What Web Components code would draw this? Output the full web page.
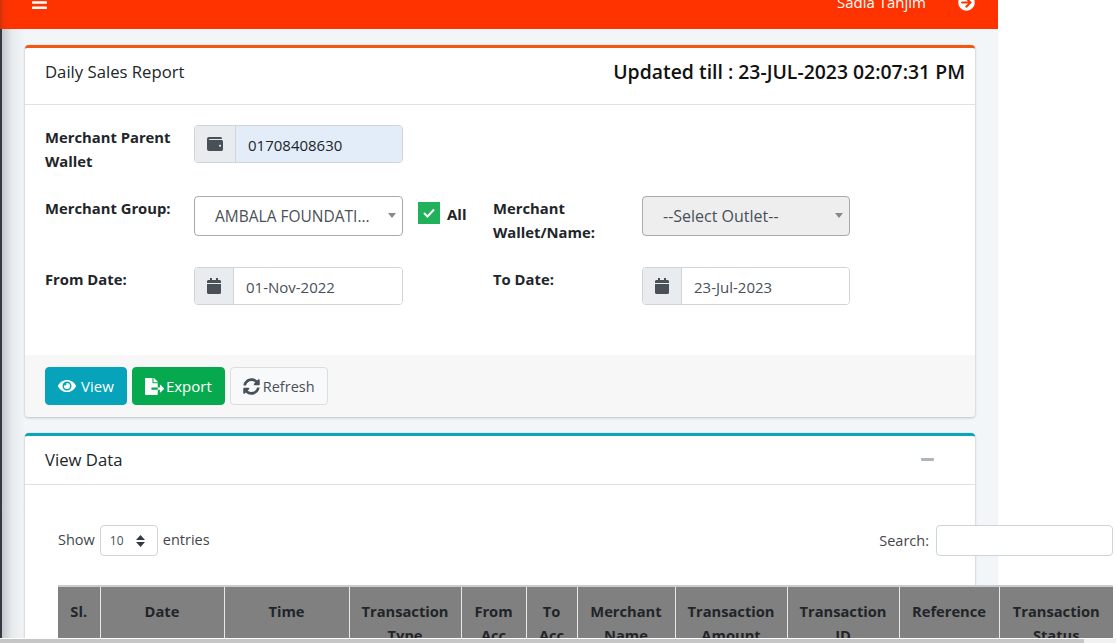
<!DOCTYPE html>
<html>
<head>
<meta charset="utf-8">
<title>Daily Sales Report</title>
<style>
html,body{margin:0;padding:0;background:#fff;overflow:hidden;}
body{font-family:"Open Sans","Noto Sans",sans-serif;font-size:15px;color:#212529;}
</style>
</head>
<body>
<app-page>
  <top-bar user="Sadia Tanjim"></top-bar>
  <ui-card accent="#f4590f" style="margin-top:16px">
    <span slot="title">Daily Sales Report</span>
    <span slot="tools" class="updated">Updated till : 23-JUL-2023 02:07:31 PM</span>
    <form-grid>
      <field-label>Merchant Parent Wallet</field-label>
      <input-group icon="wallet" value="01708408630" filled></input-group>
      <span></span><span></span><span></span>

      <field-label>Merchant Group:</field-label>
      <select-box value="AMBALA FOUNDATI..."></select-box>
      <check-box label="All"></check-box>
      <field-label>Merchant Wallet/Name:</field-label>
      <select-box value="--Select Outlet--" disabled></select-box>

      <field-label>From Date:</field-label>
      <input-group icon="calendar" value="01-Nov-2022"></input-group>
      <span></span>
      <field-label>To Date:</field-label>
      <input-group icon="calendar" value="23-Jul-2023"></input-group>
    </form-grid>
    <div slot="footer" style="display:flex;gap:5px">
      <ui-button kind="info" icon="eye" size="16">View</ui-button>
      <ui-button kind="success" icon="export" size="17">Export</ui-button>
      <ui-button kind="light" icon="sync" size="17">Refresh</ui-button>
    </div>
  </ui-card>
  <ui-card accent="#0ba5b9" collapsible style="margin-top:16px">
    <span slot="title">View Data</span>
    <sales-table></sales-table>
  </ui-card>
</app-page>

<script>
const ICONS={
  bars:['0 0 448 512','M16 132h416c8.837 0 16-7.163 16-16V76c0-8.837-7.163-16-16-16H16C7.163 60 0 67.163 0 76v40c0 8.837 7.163 16 16 16zm0 160h416c8.837 0 16-7.163 16-16v-40c0-8.837-7.163-16-16-16H16c-8.837 0-16 7.163-16 16v40c0 8.837 7.163 16 16 16zm0 160h416c8.837 0 16-7.163 16-16v-40c0-8.837-7.163-16-16-16H16c-8.837 0-16 7.163-16 16v40c0 8.837 7.163 16 16 16z'],
  wallet:['0 0 512 512','M461.2 128H80c-8.84 0-16-7.16-16-16s7.16-16 16-16h384c8.84 0 16-7.16 16-16 0-26.51-21.49-48-48-48H64C28.65 32 0 60.65 0 96v320c0 35.35 28.65 64 64 64h397.2c28.02 0 50.8-21.53 50.8-48V176c0-26.47-22.78-48-50.8-48zM416 340c-17.67 0-32-14.33-32-32s14.33-32 32-32 32 14.33 32 32-14.33 32-32 32z'],
  calendar:['0 0 448 512','M12 192h424c6.6 0 12 5.4 12 12v260c0 26.5-21.5 48-48 48H48c-26.5 0-48-21.5-48-48V204c0-6.6 5.4-12 12-12zm436-44v-36c0-26.5-21.5-48-48-48h-48V12c0-6.6-5.4-12-12-12h-40c-6.6 0-12 5.4-12 12v52H160V12c0-6.6-5.4-12-12-12h-40c-6.6 0-12 5.4-12 12v52H48C21.5 64 0 85.5 0 112v36c0 6.6 5.4 12 12 12h424c6.6 0 12-5.4 12-12z'],
  eye:['0 0 576 512','M572.52 241.4C518.29 135.59 410.93 64 288 64S57.68 135.64 3.48 241.41a32.35 32.35 0 0 0 0 29.19C57.71 376.41 165.07 448 288 448s230.32-71.64 284.52-177.41a32.35 32.35 0 0 0 0-29.19zM288 400a144 144 0 1 1 144-144 143.93 143.93 0 0 1-144 144zm0-240a95.31 95.31 0 0 0-25.31 3.79 47.85 47.85 0 0 1-66.9 66.9A95.78 95.78 0 1 0 288 160z'],
  export:['0 0 576 512','M384 121.9c0-6.3-2.5-12.4-7-16.9L279.1 7c-4.5-4.5-10.6-7-17-7H256v128h128zM571 308l-95.7-96.4c-10.1-10.1-27.4-3-27.4 11.3V288h-64v64h64v65.2c0 14.3 17.3 21.4 27.4 11.3L571 332c6.6-6.6 6.6-17.4 0-24zm-379 28v-32c0-8.8 7.2-16 16-16h176V160H248c-13.2 0-24-10.8-24-24V0H24C10.7 0 0 10.7 0 24v464c0 13.3 10.7 24 24 24h336c13.3 0 24-10.7 24-24V352H208c-8.8 0-16-7.2-16-16z'],
  sync:['0 0 512 512','M370.72 133.28C339.458 104.008 298.888 87.962 255.848 88c-77.458.068-144.328 53.178-162.791 126.85-1.344 5.363-6.122 9.15-11.651 9.15H24.103c-7.498 0-13.194-6.807-11.807-14.176C33.933 94.924 134.813 8 256 8c66.448 0 126.791 26.136 171.315 68.685L463.03 40.97C478.149 25.851 504 36.559 504 57.941V192c0 13.255-10.745 24-24 24H345.941c-21.382 0-32.09-25.851-16.971-40.971l41.75-41.749zM32 296h134.059c21.382 0 32.09 25.851 16.971 40.971l-41.75 41.75c31.262 29.273 71.835 45.319 114.876 45.28 77.418-.07 144.315-53.144 162.787-126.849 1.344-5.363 6.122-9.15 11.651-9.15h57.304c7.498 0 13.194 6.807 11.807 14.176C478.067 417.076 377.187 504 256 504c-66.448 0-126.791-26.136-171.315-68.685L48.97 471.03C33.851 486.149 8 475.441 8 454.059V320c0-13.255 10.745-24 24-24z'],
  logout:['0 0 512 512','M256 8c137 0 248 111 248 248S393 504 256 504 8 393 8 256 119 8 256 8zm-28.9 143.6l75.5 72.4H120c-13.3 0-24 10.7-24 24v16c0 13.3 10.7 24 24 24h182.6l-75.5 72.4c-9.7 9.3-9.9 24.8-.4 34.3l11 10.9c9.4 9.4 24.6 9.4 33.9 0L404.3 273c9.4-9.4 9.4-24.6 0-33.9L271.6 106.3c-9.4-9.4-24.6-9.4-33.9 0l-11 10.9c-9.5 9.6-9.3 25.1.4 34.4z']
};

class XIcon extends HTMLElement{
  connectedCallback(){
    const [box,d]=ICONS[this.getAttribute('name')];
    const size=this.getAttribute('size')||15;
    const w=size*box.split(' ')[2]/512;
    this.attachShadow({mode:'open'}).innerHTML=`<style>:host{display:inline-flex;line-height:0;}</style>
      <svg width="${w}" height="${size}" viewBox="${box}" fill="currentColor"><path d="${d}"/></svg>`;
  }
}
customElements.define('x-icon',XIcon);

class AppPage extends HTMLElement{
  constructor(){
    super();
    this.attachShadow({mode:'open'}).innerHTML=`<style>
      :host{display:flex;flex-direction:column;width:1116px;height:643px;}
      .view{flex:1;min-height:0;overflow:hidden;}
      .main{width:998px;height:100%;box-sizing:border-box;padding:0 23px 0 25px;
        background:linear-gradient(90deg,#343a40 0,#343a40 2px,#c4c9cd 2px,#e6eaed 12px,#f2f6f9 25px);}
      .bar{height:4px;margin-top:1px;flex:none;background:linear-gradient(90deg,#c6c6c6 1084px,#f1f1f1 1084px);}
      ::slotted(top-bar){margin:0 -23px 0 -25px;}
    </style>
    <div class="view"><div class="main"><slot></slot></div></div>
    <div class="bar"></div>`;
  }
}
customElements.define('app-page',AppPage);

class TopBar extends HTMLElement{
  connectedCallback(){
    this.attachShadow({mode:'open'}).innerHTML=`<style>
      :host{display:flex;height:29px;overflow:hidden;color:#fff;
        background:linear-gradient(90deg,#c93209 0,#f03206 3px,#ff3300 9px);}
      .in{flex:1;display:flex;justify-content:space-between;align-items:center;
        height:14px;margin-top:-5px;padding:0 23px 0 32px;font-size:15px;}
      .r{display:flex;align-items:center;gap:32px;}
    </style>
    <div class="in">
      <x-icon name="bars" size="17"></x-icon>
      <div class="r"><span>${this.getAttribute('user')}</span><x-icon name="logout" size="17"></x-icon></div>
    </div>`;
  }
}
customElements.define('top-bar',TopBar);

class UiCard extends HTMLElement{
  connectedCallback(){
    const min=this.hasAttribute('collapsible')?'<span class="min"></span>':'';
    this.attachShadow({mode:'open'}).innerHTML=`<style>
      :host{display:block;background:#fff;border-radius:4px;border-top:3px solid ${this.getAttribute('accent')};
        box-shadow:0 0 1px rgba(0,0,0,.2),0 1px 3px rgba(0,0,0,.2);}
      header{display:flex;justify-content:space-between;align-items:center;height:57px;padding:0 10px 10px 20px;
        box-sizing:border-box;border-bottom:1px solid #dee2e6;font-size:16.7px;}
      :host([collapsible]) header{height:49px;padding:0 41px 2px 20px;}
      ::slotted(.updated){font-size:19.4px;font-weight:600;color:#111;}
      .min{width:13px;height:3px;background:#adb5bd;border-radius:1px;}
      footer{background:#f7f7f7;padding:12px 20px;border-radius:0 0 4px 4px;}
      :host([collapsible]) footer{display:none;}
    </style>
    <header><div><slot name="title"></slot></div><slot name="tools"></slot>${min}</header>
    <slot></slot>
    <footer><slot name="footer"></slot></footer>`;
  }
}
customElements.define('ui-card',UiCard);

class FormGrid extends HTMLElement{
  constructor(){
    super();
    this.attachShadow({mode:'open'}).innerHTML=`<style>
      :host{display:grid;grid-template-columns:149px 209px 90px 149px 208px;grid-auto-rows:40px;row-gap:31px;
        padding:20px 20px 48px;align-items:start;}
    </style><slot></slot>`;
  }
}
customElements.define('form-grid',FormGrid);

class FieldLabel extends HTMLElement{
  constructor(){
    super();
    this.attachShadow({mode:'open'}).innerHTML=`<style>
      :host{display:block;font-weight:700;font-size:14.8px;line-height:24px;color:#212529;padding-right:8px;}
    </style><slot></slot>`;
  }
}
customElements.define('field-label',FieldLabel);

class InputGroup extends HTMLElement{
  connectedCallback(){
    const bg=this.hasAttribute('filled')?'#e3edf9':'#fff';
    this.attachShadow({mode:'open'}).innerHTML=`<style>
      :host{display:flex;height:38px;box-sizing:border-box;border:1px solid #ced4da;border-radius:4px;overflow:hidden;color:#495057;}
      .i{width:38px;flex:none;display:flex;align-items:center;justify-content:center;background:#e9ecef;border-right:1px solid #ced4da;}
      :host([filled]) .i{width:40px;}
      .v{flex:1;display:flex;align-items:center;padding:1px 12px 0;background:${bg};font-size:15px;}
      :host([filled]) .v{color:#212529;}
    </style>
    <div class="i"><x-icon name="${this.getAttribute('icon')}" size="16"></x-icon></div>
    <div class="v">${this.getAttribute('value')}</div>`;
  }
}
customElements.define('input-group',InputGroup);

class SelectBox extends HTMLElement{
  connectedCallback(){
    this.attachShadow({mode:'open'}).innerHTML=`<style>
      :host{display:flex;align-items:center;height:40px;box-sizing:border-box;border:1px solid #aaa;border-radius:4px;
        padding:0 6px 0 20px;background:#fff;color:#495057;font-size:15.5px;}
      :host([disabled]){background:#eee;font-size:16px;}
      span{flex:1;white-space:nowrap;overflow:hidden;}
      i{width:0;height:0;border:4px solid transparent;border-top:5px solid #888;border-bottom:0;margin-top:-2px;}
    </style><span>${this.getAttribute('value')}</span><i></i>`;
  }
}
customElements.define('select-box',SelectBox);

class CheckBox extends HTMLElement{
  connectedCallback(){
    this.attachShadow({mode:'open'}).innerHTML=`<style>
      :host{display:flex;align-items:center;gap:7px;height:40px;padding-left:15px;margin-top:-3px;font-weight:700;font-size:15px;}
      b{width:22px;height:22px;background:#20b15a;display:flex;align-items:center;justify-content:center;}
      span{margin-top:2px;}
    </style>
    <b><svg width="12" height="10" viewBox="0 0 12 10" fill="none" stroke="#fff" stroke-width="2"><path d="M1 5l3.500 3.500L11 1.500"/></svg></b>
    <span>${this.getAttribute('label')}</span>`;
  }
}
customElements.define('check-box',CheckBox);

class UiButton extends HTMLElement{
  connectedCallback(){
    const kinds={
      info:'background:#07a3ba;color:#fff;border-color:#07a3ba;gap:5px;',
      success:'background:#07a94f;color:#fff;border-color:#07a94f;gap:2px;',
      light:'background:#f8f9fa;color:#495057;border-color:#ddd;gap:3px;font-size:14.5px;'
    };
    const k=this.getAttribute('kind');
    this.attachShadow({mode:'open'}).innerHTML=`<style>
      :host{display:inline-flex;align-items:center;height:38px;box-sizing:border-box;padding:0 12px;
        border:1px solid;border-radius:4px;font-size:15px;${kinds[k]}}
    </style><x-icon name="${this.getAttribute('icon')}" size="${this.getAttribute('size')}"></x-icon><slot></slot>`;
  }
}
customElements.define('ui-button',UiButton);

class SalesTable extends HTMLElement{
  constructor(){
    super();
    const cols=[['Sl.',42],['Date',124],['Time',125],['Transaction Type',112],['From Acc',65],['To Acc',51],
      ['Merchant Name',98],['Transaction Amount',112],['Transaction ID',112],['Reference',100],['Transaction Status',114]];
    this.attachShadow({mode:'open'}).innerHTML=`<style>
      :host{display:block;width:1055px;padding:40px 0 0 33px;}
      .tools{display:flex;justify-content:space-between;align-items:flex-start;height:33px;margin-bottom:27px;font-size:14.5px;color:#3f464c;}
      .len{display:flex;align-items:center;gap:5px;line-height:28px;}
      .len .t{margin-top:-2px;}
      .sel{display:flex;align-items:center;justify-content:space-between;width:58px;height:31px;box-sizing:border-box;
        border:1px solid #ced4da;border-radius:4px;padding:1px 12px 0 9px;font-size:12px;color:#495057;}
      .search{display:flex;align-items:center;gap:7px;line-height:30px;}
      .inp{width:177px;height:31px;box-sizing:border-box;border:1px solid #ced4da;border-radius:4px;background:#fff;}
      table{border-collapse:collapse;table-layout:fixed;width:1055px;border-top:2px solid #ccc;}
      th{background:#808080;color:#212529;font-size:14.7px;font-weight:700;line-height:24px;padding:12px 6px;text-align:center;
        border-left:1px solid #e8e8e8;vertical-align:top;}
      th:first-child{border-left:0;}
    </style>
    <div class="tools">
      <div class="len"><span class="t">Show</span><div class="sel"><span>10</span>
        <svg width="9" height="12" viewBox="0 0 9 12" fill="#343a40"><path d="M4.500 0L9 5H0zM4.500 12L0 7h9z"/></svg></div><span class="t">entries</span></div>
      <div class="search">Search: <div class="inp"></div></div>
    </div>
    <table><colgroup>${cols.map(c=>`<col style="width:${c[1]}px">`).join('')}</colgroup>
      <thead><tr>${cols.map(c=>`<th>${c[0]}</th>`).join('')}</tr></thead></table>`;
  }
}
customElements.define('sales-table',SalesTable);
</script>
</body>
</html>
